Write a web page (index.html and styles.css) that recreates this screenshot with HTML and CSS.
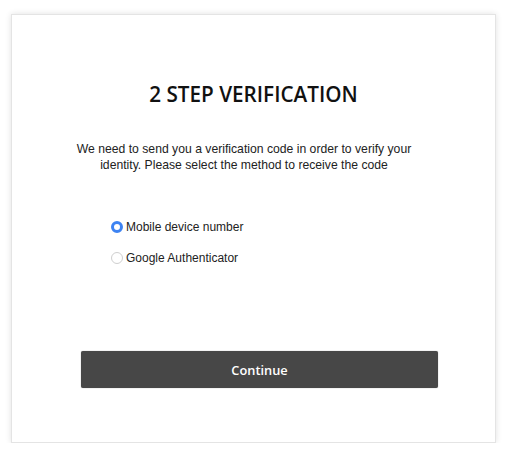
FILE: index.html
```html
<!DOCTYPE html>
<html>
<head>
<meta charset="utf-8">
<link rel="stylesheet" href="styles.css">
</head>
<body>
<div class="card">
  <h1 class="title">2 STEP VERIFICATION</h1>
  <p class="intro">We need to send you a verification code in order to verify your identity. Please select the method to receive the code</p>
  <div class="options">
    <label class="option"><span class="radio checked"></span><span>Mobile device number</span></label>
    <label class="option"><span class="radio"></span><span>Google Authenticator</span></label>
  </div>
  <button class="continue">Continue</button>
</div>
</body>
</html>
```
FILE: styles.css
```css
html, body {
  margin: 0;
  padding: 0;
  background: #ffffff;
}
body {
  padding: 14px 0 0 11px;
}
.card {
  box-sizing: border-box;
  width: 485px;
  height: 429px;
  background: #ffffff;
  border: 1px solid #e4e4e4;
  box-shadow: 0 0 6px rgba(0, 0, 0, 0.12);
  display: flex;
  flex-direction: column;
  align-items: flex-start;
  padding-top: 65px;
}
.title {
  align-self: stretch;
  margin: 0;
  text-align: center;
  font-family: "Open Sans", sans-serif;
  font-weight: 600;
  font-size: 20.7px;
  line-height: 28px;
  color: #111111;
}
.intro {
  margin: 33px 0 0 54px;
  width: 356px;
  text-align: center;
  font-family: "Liberation Sans", Arial, sans-serif;
  font-size: 12.2px;
  line-height: 16px;
  color: #222222;
}
.options {
  margin: 48px 0 0 99px;
  display: flex;
  flex-direction: column;
  gap: 19px;
}
.option {
  display: flex;
  align-items: center;
  gap: 3px;
  font-family: "Liberation Sans", Arial, sans-serif;
  font-size: 12px;
  line-height: 12px;
  color: #222222;
}
.radio {
  box-sizing: border-box;
  width: 12px;
  height: 12px;
  border-radius: 50%;
  border: 1px solid #cfcfcf;
  background: #fff;
}
.radio.checked {
  border: 3.5px solid #3d83f2;
  background: #fff;
}
.continue {
  margin: 87px 0 0 69px;
  width: 357px;
  height: 37px;
  border: none;
  border-radius: 2px;
  background: #474747;
  box-shadow: 0 0 1px rgba(0,0,0,0.5);
  color: #ffffff;
  font-family: "Open Sans", sans-serif;
  font-weight: 600;
  font-size: 12.8px;
  cursor: pointer;
}
```
